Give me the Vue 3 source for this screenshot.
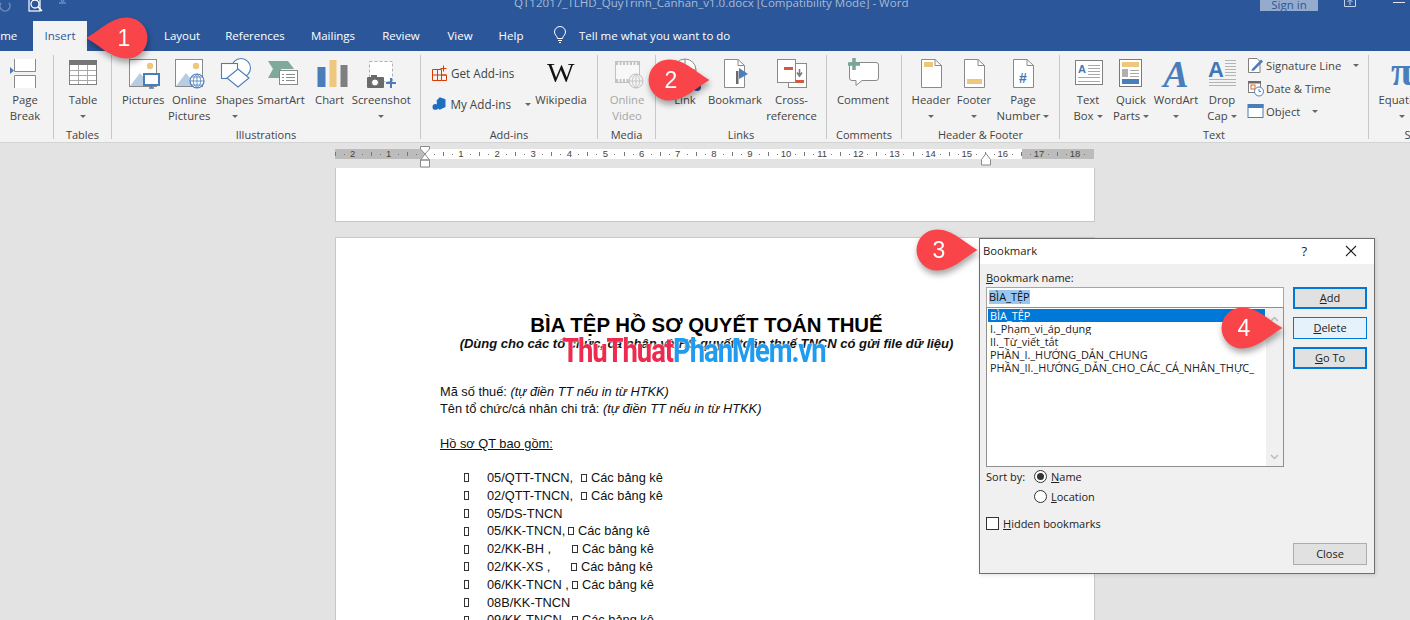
<script setup>
const rulerCells = [2,1,'',1,2,3,4,5,6,7,8,9,10,11,12,13,14,15,16,17,18]
const rows = [
  { code: '05/QTT-TNCN,', at: 94, extra: true },
  { code: '02/QTT-TNCN,', at: 94, extra: true },
  { code: '05/DS-TNCN', at: 94, extra: false },
  { code: '05/KK-TNCN,', at: 81, extra: true },
  { code: '02/KK-BH ,', at: 85, extra: true },
  { code: '02/KK-XS ,', at: 84, extra: true },
  { code: '06/KK-TNCN ,', at: 85, extra: true },
  { code: '08B/KK-TNCN', at: 94, extra: false },
  { code: '09/KK-TNCN ,', at: 85, extra: true }
]
const bookmarks = ['BÌA_TỆP','I._Phạm_vi_áp_dụng','II._Từ_viết_tắt','PHẦN_I._HƯỚNG_DẪN_CHUNG','PHẦN_II._HƯỚNG_DẪN_CHO_CÁC_CÁ_NHÂN_THỰC_']
const callouts = [
  { n: 1, x: 128, y: 38, flip: true, tx: -4 },
  { n: 2, x: 668, y: 80, flip: false, tx: 3 },
  { n: 3, x: 936, y: 250, flip: false, tx: 3 },
  { n: 4, x: 1241, y: 328, flip: false, tx: 3 }
]
</script>

<template>
  <div class="app">
    <header class="head">
      <div class="qat">
        <svg class="qat-ic" width="70" height="16" viewBox="0 0 70 16">
          <path d="M1 3 A5 5 0 1 0 9 3" fill="none" stroke="#6f8dba" stroke-width="1.4"/>
          <rect x="29" y="-3" width="11" height="14" fill="none" stroke="#fff" stroke-width="1.2"/>
          <circle cx="35" cy="4" r="4" fill="#2b579a" stroke="#fff" stroke-width="1.3"/>
          <path d="M38 7 L42 11" stroke="#fff" stroke-width="1.6"/>
          <path d="M59 3 H66 M60 -1 L62.500 2 L65 -1" fill="none" stroke="#8ea6ca" stroke-width="1"/>
        </svg>
      </div>
      <div class="doc-title">QT12017_TLHD_QuyTrinh_Canhan_v1.0.docx [Compatibility Mode]  -  Word</div>
      <div class="win">
        <span class="signin">Sign in</span>
        <svg width="12" height="7" viewBox="0 0 12 7" class="share"><path d="M.5 0 V6.500 H11.500 V0 M6 5 V0 M3.500 2 L6 -.5 L8.500 2" fill="none" stroke="#c5d2e6" stroke-width="1"/></svg>
        <span class="minim"></span>
      </div>
    </header>
    <nav class="tabs">
      <span class="tab home">Home</span>
      <span class="tab active">Insert</span>
      <span class="tab spacer"></span>
      <span class="tab w-layout">Layout</span>
      <span class="tab w-ref">References</span>
      <span class="tab w-mail">Mailings</span>
      <span class="tab w-rev">Review</span>
      <span class="tab w-view">View</span>
      <span class="tab w-help">Help</span>
      <span class="tell">
        <svg width="14" height="18" viewBox="0 0 14 18"><path d="M4.500 12.500 C4 9.500 1.500 9 1.500 6 A5.500 5.500 0 0 1 12.500 6 C12.500 9 10 9.500 9.500 12.500 Z M5 14.500 H9 M6 16.500 H8" fill="none" stroke="#fff" stroke-width="1"/></svg>
        <span>Tell me what you want to do</span>
      </span>
    </nav>

    <section class="ribbon">
      <div class="grp g-page">
        <div class="items">
          <div class="big w50">
            <svg class="ic" viewBox="0 0 44 36"><path d="M11.500 3 V15.500 H32.500 V3 M11.500 32 V19.500 H32.500 V32" fill="#fff" stroke="#8a8a8a"/><path d="M7 11 L11 14.500 L7 18z" fill="#4a7ebb"/></svg>
            <span class="lbl">Page</span><span class="lbl">Break</span>
          </div>
        </div>
      </div>

      <div class="grp g-tables">
        <div class="items">
          <div class="big w58">
            <svg class="ic" viewBox="0 0 44 36"><rect x="8.500" y="4.500" width="27" height="24" fill="#fff" stroke="#808080"/><rect x="8" y="4" width="28" height="5" fill="#767676"/><path d="M17.500 9 V28 M26.500 9 V28 M9 14.500 H35 M9 19.500 H35 M9 24.500 H35" stroke="#a8a8a8"/></svg>
            <span class="lbl">Table</span><span class="lbl"><i class="caret"></i></span>
          </div>
        </div>
        <div class="gl">Tables</div>
      </div>

      <div class="grp g-ill">
        <div class="items pl8">
          <div class="big w-pic">
            <svg class="ic" viewBox="0 0 44 36"><rect x="8.500" y="3.500" width="27" height="27" fill="#fff" stroke="#8a8a8a"/><path d="M9 30 L19 17 L30 30z" fill="#b9cde2"/><circle cx="29" cy="10" r="3.200" fill="#efc77c"/><rect x="23" y="18" width="15" height="11" fill="#fff" stroke="#4a7ebb" stroke-width="2"/><path d="M28 32 H33 M30.500 29 V32" stroke="#4a7ebb" stroke-width="1.400"/></svg>
            <span class="lbl">Pictures</span>
          </div>
          <div class="big w-onl">
            <svg class="ic" viewBox="0 0 44 36"><rect x="8.500" y="3.500" width="27" height="27" fill="#fff" stroke="#8a8a8a"/><path d="M9 30 L19 17 L30 30z" fill="#b9cde2"/><circle cx="29" cy="10" r="3.200" fill="#efc77c"/><circle cx="30" cy="25" r="7" fill="#fff" stroke="#4a7ebb" stroke-width="1.200"/><path d="M23 25 H37 M30 18 V32 M24.500 21 H35.500 M24.500 29 H35.500 M30 18 C25 22 25 28 30 32 C35 28 35 22 30 18" fill="none" stroke="#4a7ebb" stroke-width=".8"/></svg>
            <span class="lbl">Online</span><span class="lbl">Pictures</span>
          </div>
          <div class="big w-sha">
            <svg class="ic" viewBox="0 0 44 36"><circle cx="28" cy="12" r="9.500" fill="#fff" stroke="#4a7ebb" stroke-width="1.100"/><rect x="8.500" y="7.500" width="16" height="15" fill="#fff" stroke="#4a7ebb" stroke-width="1.100"/><path d="M25 13 L36 22 L25 31 L14 22z" fill="#fff" stroke="#4a7ebb" stroke-width="1.100"/></svg>
            <span class="lbl">Shapes</span><span class="lbl"><i class="caret"></i></span>
          </div>
          <div class="big w-sma">
            <svg class="ic" viewBox="0 0 44 36"><path d="M9 5 H29 L35 13 H22 V22 H9 L14 13z" fill="#7fa99b"/><rect x="20.500" y="14.500" width="18" height="14" fill="#fff" stroke="#8a8a8a"/><path d="M23 18.500 H25 M27 18.500 H36 M23 21.500 H25 M27 21.500 H36 M23 24.500 H25 M27 24.500 H36" stroke="#8a8a8a"/></svg>
            <span class="lbl">SmartArt</span>
          </div>
          <div class="big w-cha">
            <svg class="ic" viewBox="0 0 44 36"><rect x="9.500" y="11" width="8" height="20" fill="#4a7ebb"/><rect x="21.500" y="4" width="7" height="27" fill="#eec87f"/><rect x="32.500" y="9" width="7" height="22" fill="#7f7f7f"/></svg>
            <span class="lbl">Chart</span>
          </div>
          <div class="big w-scr">
            <svg class="ic" viewBox="0 0 44 36"><rect x="10.500" y="5.500" width="23" height="20" fill="#fff" stroke="#b0b0b0" stroke-dasharray="3 2"/><rect x="8" y="21" width="17" height="11" rx="1" fill="#6a6a6a"/><rect x="12" y="19" width="6" height="3" fill="#6a6a6a"/><circle cx="16" cy="26.500" r="3.500" fill="#fff" stroke="#6a6a6a"/><path d="M32 22 V32 M27 27 H37" stroke="#4a7ebb" stroke-width="2"/></svg>
            <span class="lbl">Screenshot</span><span class="lbl"><i class="caret"></i></span>
          </div>
        </div>
        <div class="gl">Illustrations</div>
      </div>

      <div class="grp g-add">
        <div class="items pl11">
          <div class="small-col">
            <div class="small">
              <svg width="15" height="16" viewBox="0 0 15 16"><path d="M.5 4.500 H9.500 V15.500 H.5z M.5 10 H14.500 M5.500 4.500 V15.500 M9.500 10 H14.500 V15.500 H9.500" fill="none" stroke="#d83b01"/><path d="M11.500 .5 V6.500 M8.500 3.500 H14.500" stroke="#d83b01"/></svg>
              <span>Get Add-ins</span>
            </div>
            <div class="small">
              <svg width="15" height="16" viewBox="0 0 15 16"><path d="M8 1 L14 3 V11 L8 14 L5 12 V4z" fill="#1f6fc0"/><circle cx="3.500" cy="11" r="3" fill="#1f6fc0"/></svg>
              <span>My Add-ins</span><i class="caret ml12"></i>
            </div>
          </div>
          <div class="big w60">
            <div class="wiki">W</div>
            <span class="lbl">Wikipedia</span>
          </div>
        </div>
        <div class="gl">Add-ins</div>
      </div>

      <div class="grp g-media">
        <div class="items">
          <div class="big w58 dim">
            <svg class="ic" viewBox="0 0 44 36"><rect x="10.500" y="5.500" width="24" height="21" fill="#f8f8f8" stroke="#c2c2c2"/><path d="M11 7.500 H34 M11 24.500 H34" stroke="#c2c2c2" stroke-width="3" stroke-dasharray="2 1.500"/><circle cx="31" cy="25" r="7" fill="#f3f3f3" stroke="#bdbdbd"/><path d="M24 25 H38 M31 18 V32 M31 18 C26 22 26 28 31 32 C36 28 36 22 31 18" fill="none" stroke="#bdbdbd" stroke-width=".8"/></svg>
            <span class="lbl">Online</span><span class="lbl">Video</span>
          </div>
        </div>
        <div class="gl">Media</div>
      </div>

      <div class="grp g-links">
        <div class="items">
          <div class="big w58">
            <svg class="ic" viewBox="0 0 44 36"><circle cx="22" cy="14" r="11" fill="#fff" stroke="#8a8a8a"/><path d="M11 14 H33 M22 3 V25" stroke="#8a8a8a"/><circle cx="34" cy="31" r="4" fill="#2b579a"/></svg>
            <span class="lbl">Link</span>
          </div>
          <div class="big w42">
            <svg class="ic" viewBox="0 0 44 36"><path d="M11.500 3.500 H25 L31.500 9.500 V31.500 H11.500z" fill="#fff" stroke="#8a8a8a"/><path d="M25 3.500 V9.500 H31.500" fill="none" stroke="#8a8a8a"/><rect x="23" y="15" width="2.500" height="13" fill="#6a6a6a"/><path d="M26 12 L35 18 L26 23z" fill="#4a7ebb"/></svg>
            <span class="lbl">Bookmark</span>
          </div>
          <div class="big w71">
            <svg class="ic" viewBox="0 0 44 36"><rect x="18.500" y="7.500" width="18" height="24" fill="#fff" stroke="#8a8a8a"/><rect x="7.500" y="3.500" width="18" height="23" fill="#fff" stroke="#8a8a8a"/><rect x="14" y="11" width="9" height="3" fill="#d2593c"/><rect x="26" y="24" width="8" height="3" fill="#d2593c"/><path d="M29.500 13 V19 M27 16.500 L29.500 20 L32 16.500" fill="none" stroke="#7a7a7a" stroke-width="1.600"/></svg>
            <span class="lbl">Cross-</span><span class="lbl">reference</span>
          </div>
        </div>
        <div class="gl">Links</div>
      </div>

      <div class="grp g-com">
        <div class="items">
          <div class="big w72">
            <svg class="ic" viewBox="0 0 44 36"><path d="M11 6.500 H35 Q37.500 6.500 37.500 9 V22 Q37.500 24.500 35 24.500 H21 L15 29.500 V24.500 H11 Q8.500 24.500 8.500 22 V9 Q8.500 6.500 11 6.500z" fill="#fff" stroke="#8a8a8a"/><path d="M13 2 V14 M7 8 H19" stroke="#79a795" stroke-width="3.500"/></svg>
            <span class="lbl">Comment</span>
          </div>
        </div>
        <div class="gl">Comments</div>
      </div>

      <div class="grp g-hf">
        <div class="items">
          <div class="big w58">
            <svg class="ic" viewBox="0 0 44 36"><path d="M12.500 3.500 H26 L32.500 9.500 V31.500 H12.500z" fill="#fff" stroke="#8a8a8a"/><path d="M26 3.500 V9.500 H32.500" fill="none" stroke="#8a8a8a"/><rect x="15" y="6" width="9" height="5" fill="#efc77c"/></svg>
            <span class="lbl">Header</span><span class="lbl"><i class="caret"></i></span>
          </div>
          <div class="big w28">
            <svg class="ic" viewBox="0 0 44 36"><path d="M12.500 3.500 H26 L32.500 9.500 V31.500 H12.500z" fill="#fff" stroke="#8a8a8a"/><path d="M26 3.500 V9.500 H32.500" fill="none" stroke="#8a8a8a"/><rect x="15" y="23" width="15" height="5" fill="#efc77c"/></svg>
            <span class="lbl">Footer</span><span class="lbl"><i class="caret"></i></span>
          </div>
          <div class="big w70">
            <svg class="ic" viewBox="0 0 44 36"><path d="M12.500 3.500 H26 L32.500 9.500 V31.500 H12.500z" fill="#fff" stroke="#8a8a8a"/><path d="M26 3.500 V9.500 H32.500" fill="none" stroke="#8a8a8a"/><text x="22" y="27" class="hash">#</text></svg>
            <span class="lbl">Page</span><span class="lbl">Number<i class="caret ml2"></i></span>
          </div>
        </div>
        <div class="gl">Header &amp; Footer</div>
      </div>

      <div class="grp g-text">
        <div class="items">
          <div class="big w56">
            <svg class="ic" viewBox="0 0 44 36"><rect x="9.500" y="4.500" width="27" height="24" fill="#fff" stroke="#808080"/><text x="12" y="17" class="txt-a">A</text><path d="M22 9.500 H34 M22 12.500 H34 M22 15.500 H34 M22 18.500 H34 M12 21.500 H34 M12 25.500 H34" stroke="#a8a8a8"/></svg>
            <span class="lbl">Text</span><span class="lbl">Box<i class="caret ml2"></i></span>
          </div>
          <div class="big w30">
            <svg class="ic" viewBox="0 0 44 36"><rect x="10.500" y="3.500" width="22" height="27" fill="#fff" stroke="#7a7a7a"/><rect x="13" y="6" width="17" height="5" fill="#efc77c"/><rect x="13" y="13" width="6" height="8" fill="#b0b0b0"/><path d="M21 14.500 H30 M21 17.500 H30 M21 20.500 H30" stroke="#a8a8a8"/><rect x="13" y="23" width="17" height="5" fill="#4a7ebb"/></svg>
            <span class="lbl">Quick</span><span class="lbl">Parts<i class="caret ml2"></i></span>
          </div>
          <div class="big w60">
            <div class="wa">A</div>
            <span class="lbl">WordArt</span><span class="lbl"><i class="caret"></i></span>
          </div>
          <div class="big w32">
            <svg class="ic" viewBox="0 0 44 36"><text x="8" y="21" class="dc-a">A</text><path d="M25 4.500 H36 M25 7.500 H36 M25 10.500 H36 M25 13.500 H36 M25 16.500 H36 M25 19.500 H36 M9 23.500 H36 M9 26.500 H36 M9 29.500 H36" stroke="#b4b4b4"/></svg>
            <span class="lbl">Drop</span><span class="lbl">Cap<i class="caret ml2"></i></span>
          </div>
          <div class="side-col">
            <div class="side">
              <svg width="17" height="18" viewBox="0 0 17 18"><path d="M1.500 2.500 H10 L13 5.500 V16.500 H1.500z" fill="#fff" stroke="#808080"/><path d="M5 13 L14 3.500 L16 5.500 L7 14.500 L4.500 15z" fill="#4a7ebb"/></svg>
              <span>Signature Line</span><i class="caret ml12"></i>
            </div>
            <div class="side">
              <svg width="17" height="18" viewBox="0 0 17 18"><rect x="1.500" y="2.500" width="12" height="11" fill="#fff" stroke="#808080"/><rect x="1" y="2" width="13" height="2.500" fill="#6a6a6a"/><rect x="4" y="6" width="4" height="4" fill="#fff" stroke="#d86a1c"/><circle cx="12" cy="12.500" r="4.500" fill="#fff" stroke="#4a7ebb"/><path d="M12 10 V12.500 H14" fill="none" stroke="#4a7ebb"/></svg>
              <span>Date &amp; Time</span>
            </div>
            <div class="side">
              <svg width="17" height="18" viewBox="0 0 17 18"><rect x="1" y="2.500" width="15" height="13" fill="#fff" stroke="#4a7ebb"/><rect x="1" y="2" width="15.500" height="4" fill="#4a7ebb"/></svg>
              <span>Object</span><i class="caret ml12"></i>
            </div>
          </div>
        </div>
        <div class="gl">Text</div>
      </div>

      <div class="grp g-sym">
        <div class="items">
          <div class="big w66">
            <div class="pi">π</div>
            <span class="lbl">Equation</span><span class="lbl"><i class="caret"></i></span>
          </div>
        </div>
        <div class="gl">Symbols</div>
      </div>
    </section>

    <main class="canvas">
      <div class="ruler">
        <span v-for="(c, i) in rulerCells" :key="i" class="cell">{{ c }}</span>
        <svg class="m-left" width="12" height="22" viewBox="0 0 12 22"><path d="M1.500 .5 H10.500 V3 L6 8 L1.500 3z M1.500 14 L6 8 L10.500 14 Z M1.500 14 H10.500 V21 H1.500z" fill="#fff" stroke="#8a8a8a"/></svg>
        <svg class="m-right" width="12" height="13" viewBox="0 0 12 13"><path d="M6 .5 L10.500 6.500 V12 H1.500 V6.500z" fill="#fff" stroke="#8a8a8a"/></svg>
      </div>

      <div class="page p1"></div>

      <article class="page p2">
        <h1 class="doc-h">BÌA TỆP HỒ SƠ QUYẾT TOÁN THUẾ</h1>
        <p class="doc-sub">(Dùng cho các tổ chức, cá nhân và HS quyết toán thuế TNCN có gửi file dữ liệu)</p>
        <p class="ln mt-a">Mã số thuế: <em>(tự điền TT nếu in từ HTKK)</em></p>
        <p class="ln">Tên tổ chức/cá nhân chi trả: <em>(tự điền TT nếu in từ HTKK)</em></p>
        <p class="ln mt-b"><u>Hồ sơ QT bao gồm:</u></p>
        <ul class="list">
          <li v-for="r in rows" :key="r.code" class="row">
            <i class="box"></i>
            <span class="code" :style="{ width: r.at + 'px' }">{{ r.code }}</span>
            <template v-if="r.extra"><i class="box b2"></i><span>Các bảng kê</span></template>
          </li>
        </ul>
      </article>
    </main>

    <div class="mark"><span class="m-red">ThuThuat</span><span class="m-blue">PhanMem.vn</span></div>

    <div class="dlg">
      <div class="dlg-top">
        <span class="dlg-title">Bookmark</span>
        <span class="dlg-q">?</span>
        <svg width="12" height="12" viewBox="0 0 12 12" class="dlg-x"><path d="M1 1 L11 11 M11 1 L1 11" stroke="#222" stroke-width="1.100"/></svg>
      </div>
      <div class="dlg-body">
        <div class="dlg-left">
          <label class="dlg-lbl"><u>B</u>ookmark name:</label>
          <div class="inp"><span class="sel">BÌA_TỆP</span></div>
          <div class="lst">
            <div class="lst-items">
              <div v-for="(b, i) in bookmarks" :key="b" class="lst-i" :class="{ on: i === 0 }">{{ b }}</div>
            </div>
            <div class="scroll">
              <svg width="9" height="6" viewBox="0 0 9 6"><path d="M1 5 L4.500 1.500 L8 5" fill="none" stroke="#bcbcbc" stroke-width="1.500"/></svg>
              <svg width="9" height="6" viewBox="0 0 9 6"><path d="M1 1 L4.500 4.500 L8 1" fill="none" stroke="#bcbcbc" stroke-width="1.500"/></svg>
            </div>
          </div>
          <div class="sort">
            <span class="sort-l">Sort by:</span>
            <div class="radios">
              <div class="radio-row"><i class="radio on"></i><span><u>N</u>ame</span></div>
              <div class="radio-row"><i class="radio"></i><span><u>L</u>ocation</span></div>
            </div>
          </div>
          <div class="hidden-row"><i class="check"></i><span><u>H</u>idden bookmarks</span></div>
        </div>
        <div class="dlg-right">
          <button class="btn def"><u>A</u>dd</button>
          <button class="btn hov"><u>D</u>elete</button>
          <button class="btn def"><u>G</u>o To</button>
          <button class="btn plain">Close</button>
        </div>
      </div>
    </div>

    <svg v-for="c in callouts" :key="c.n" class="callout" :style="{ left: (c.x - 45) + 'px', top: (c.y - 30) + 'px' }" width="90" height="60" viewBox="-45 -30 90 60">
      <path :transform="c.flip ? 'scale(-1 1)' : ''" d="M41.500 0 C29 -7 17 -20.500 1 -20.500 A20.500 20.500 0 0 0 1 20.500 C17 20.500 29 7 41.500 0Z" fill="#f94449"/>
      <text :x="c.tx" y="8" class="c-num">{{ c.n }}</text>
    </svg>
  </div>
</template>

<style>
html, body { margin: 0; padding: 0; background: #e3e3e3; }
</style>

<style scoped>
.app { position: relative; width: 1410px; height: 620px; overflow: hidden; background: #e3e3e3; font-family: "Open Sans", "Noto Sans", sans-serif; font-size: 11.3px; color: #444; }
.head { height: 21px; background: #2b579a; display: flex; overflow: hidden; }
.qat { width: 514px; height: 16px; flex: none; }
.qat-ic { display: block; }
.doc-title { margin-top: -5px; line-height: 16px; color: #a8bad6; white-space: pre; font-size: 11.55px; }
.win { margin-left: auto; display: flex; align-items: flex-start; }
.signin { width: 58px; height: 11px; background: #95abcd; color: #2b579a; text-align: center; line-height: 10px; font-size: 11.5px; overflow: hidden; }
.share { margin-left: 26px; }
.minim { width: 12px; height: 1px; background: #dfe6f1; margin: 2px 5px 0 37px; }
.tabs { height: 30px; background: #2b579a; display: flex; align-items: stretch; color: #fff; font-size: 11.5px; }
.tab { display: flex; align-items: center; justify-content: center; flex: none; box-sizing: border-box; padding-bottom: 2px; }
.home { width: 54px; margin-left: -26px; margin-right: 5px; }
.active { width: 54px; background: #f3f3f3; color: #2b579a; }
.spacer { width: 63px; }
.w-layout { width: 64px; }
.w-ref { width: 82px; }
.w-mail { width: 74px; }
.w-rev { width: 62px; }
.w-view { width: 56px; }
.w-help { width: 46px; }
.tell { display: flex; align-items: center; gap: 12px; margin-left: 19px; padding-bottom: 2px; }
.ribbon { height: 92px; box-sizing: border-box; padding-top: 4px; background: #f3f3f3; border-bottom: 1px solid #d4d4d4; display: flex; overflow: hidden; }
.grp { height: 84px; flex: none; box-sizing: border-box; padding-top: 1px; border-right: 1px solid #c8c8c8; }
.g-page { width: 54px; }
.g-tables { width: 58px; }
.g-ill { width: 309px; }
.g-add { width: 177px; }
.g-media { width: 58px; }
.g-links { width: 171px; }
.g-com { width: 75px; }
.g-hf { width: 158px; }
.g-text { width: 309px; }
.g-sym { width: 114px; border-right: none; }
.items { height: 72px; display: flex; }
.pl8 { padding-left: 8px; }
.pl11 { padding-left: 11px; }
.gl { line-height: 14px; text-align: center; white-space: nowrap; font-size: 11px; }
.big { display: flex; flex-direction: column; align-items: center; flex: none; }
.ic { width: 44px; height: 36px; flex: none; display: block; }
.lbl { line-height: 16px; height: 16px; white-space: nowrap; flex: none; display: flex; align-items: center; }
.dim { color: #a6a6a6; }
.w28 { width: 28px; } .w30 { width: 30px; } .w32 { width: 32px; } .w42 { width: 42px; } .w50 { width: 50px; }
.w56 { width: 56px; } .w58 { width: 58px; } .w60 { width: 60px; } .w66 { width: 66px; } .w70 { width: 70px; }
.w71 { width: 71px; } .w72 { width: 72px; }
.w-pic { width: 46.5px; } .w-onl, .w-sha { width: 45.5px; } .w-sma { width: 47px; } .w-cha { width: 50px; } .w-scr { width: 53.5px; }
.caret { display: inline-block; width: 0; height: 0; border-left: 3.5px solid transparent; border-right: 3.5px solid transparent; border-top: 3.5px solid #666; flex: none; }
.ml2 { margin-left: 3px; }
.ml12 { margin-left: 10px; }
.small-col { width: 99px; flex: none; padding-top: 9px; display: flex; flex-direction: column; gap: 15px; font-size: 11.7px; }
.small { height: 16px; display: flex; align-items: center; gap: 4px; white-space: nowrap; }
.wiki { height: 36px; font: 27px/34px "Liberation Serif", serif; color: #111; flex: none; transform: scaleX(1.08); }
.wa { height: 36px; font: italic 700 38px/36px "Liberation Serif", serif; color: #4a7ebb; flex: none; }
.pi { height: 36px; font: bold 40px/32px "Liberation Serif", serif; color: #4a7ebb; flex: none; }
.hash { font: bold 14px "Liberation Sans", sans-serif; fill: #3f78b8; text-anchor: middle; }
.txt-a { font: bold 11px "Liberation Sans", sans-serif; fill: #3f78b8; }
.dc-a { font: bold 22px "Liberation Sans", sans-serif; fill: #3f78b8; }
.side-col { margin-left: 9px; margin-top: -1px; display: flex; flex-direction: column; gap: 3px; }
.side { height: 20px; display: flex; align-items: center; gap: 2px; white-space: nowrap; }
.canvas { height: 477px; box-sizing: border-box; padding-top: 6px; overflow: hidden; }
.ruler { position: relative; width: 759px; height: 10px; margin-left: 334.500px; display: flex; background: linear-gradient(to right, #bcbcbc 90px, #fff 90px, #fff 687px, #bcbcbc 687px); }
.cell { width: 36.140px; flex: none; text-align: center; font: 9.5px/10px "Liberation Sans", sans-serif; color: #444;
  background:
    linear-gradient(#777, #777) 0 50% / 1px 4px no-repeat,
    linear-gradient(#777, #777) 9px 50% / 1px 1px no-repeat,
    linear-gradient(#777, #777) 27px 50% / 1px 1px no-repeat; }
.m-left { position: absolute; left: 84px; top: -3px; }
.m-right { position: absolute; left: 645px; top: 4px; }
.page { width: 760px; box-sizing: border-box; margin-left: 335px; background: #fff; border: 1px solid #c8c8c8; }
.p1 { height: 54px; margin-top: 9px; border-top: none; }
.p2 { margin-top: 15px; height: 460px; padding: 77px 121px 0 104px; font-family: "Liberation Sans", Arial, sans-serif; font-size: 12.8px; color: #111; }
.doc-h { margin: 0; text-align: center; font-size: 20.4px; line-height: 20px; font-weight: 700; color: #000; white-space: nowrap; }
.doc-sub { margin: 0; text-align: center; font-size: 13px; line-height: 17px; font-weight: 700; font-style: italic; white-space: nowrap; }
.ln { margin: 0; line-height: 17px; white-space: nowrap; }
.mt-a { margin-top: 31px; }
.mt-b { margin-top: 18px; }
.list { list-style: none; margin: 17px 0 0; padding: 0 0 0 24px; }
.row { height: 17.800px; line-height: 17.800px; display: flex; align-items: center; white-space: pre; }
.box { display: inline-block; box-sizing: border-box; width: 5px; height: 9px; border: 1px solid #333; flex: none; margin-right: 18px; }
.code { flex: none; white-space: pre; }
.b2 { width: 6px; height: 8px; margin-right: 4px; }
.mark { position: absolute; left: 562px; top: 330px; font: 700 34px/40px "Roboto", "Liberation Sans", sans-serif; letter-spacing: -1.300px; white-space: nowrap; transform: scaleX(.807); transform-origin: 0 50%; text-shadow: 0 0 2px #fff, 0 0 2px #fff; }
.m-red { color: #ee2a4f; }
.m-blue { color: #1f9bf0; }
.dlg { position: absolute; left: 979px; top: 238px; width: 396px; height: 336px; box-sizing: border-box; border: 1px solid #6e6e6e; background: #f0f0f0; display: flex; flex-direction: column; color: #222; font-size: 11px; box-shadow: 1px 1px 4px rgba(0,0,0,.12); }
.dlg-top { height: 25px; background: #fff; display: flex; align-items: center; padding: 0 0 2px 3px; box-sizing: border-box; flex: none; }
.dlg-title { font-size: 11.3px; }
.dlg-q { margin-left: auto; font-size: 13px; }
.dlg-x { margin: 0 17px 0 38px; }
.dlg-body { flex: 1; display: flex; gap: 9px; padding: 0 7px 8px 6px; min-height: 0; }
.dlg-left { width: 298px; flex: none; }
.dlg-lbl { display: block; height: 23px; line-height: 17px; padding-top: 5px; box-sizing: border-box; }
.inp { height: 20px; box-sizing: border-box; background: #fff; border: 1px solid #a5a5a5; border-bottom: none; padding: 2px 2px; line-height: 14px; display: flex; }
.sel { background: #9bc7ee; color: #111; height: 14px; }
.lst { height: 160px; box-sizing: border-box; background: #fff; border: 1px solid #8f8f8f; display: flex; }
.lst-items { flex: 1; padding: 1px 1px 0 1px; min-width: 0; }
.lst-i { height: 13px; line-height: 13px; padding-left: 2px; white-space: nowrap; overflow: hidden; color: #222; font-size: 10.9px; }
.lst-i.on { background: #0078d7; color: #fff; }
.scroll { width: 17px; flex: none; background: #f0f0f0; display: flex; flex-direction: column; justify-content: space-between; align-items: center; padding: 8px 0 6px; box-sizing: border-box; }
.sort { display: flex; margin-top: 1px; }
.sort-l { width: 48px; line-height: 17px; flex: none; }
.radios { display: flex; flex-direction: column; gap: 3px; }
.radio-row { height: 17px; display: flex; align-items: center; gap: 4px; }
.radio { width: 13px; height: 13px; box-sizing: border-box; border: 1px solid #333; border-radius: 50%; background: #fff; flex: none; display: flex; align-items: center; justify-content: center; }
.radio.on::after { content: ""; width: 7px; height: 7px; border-radius: 50%; background: #333; }
.hidden-row { display: flex; align-items: center; gap: 4px; margin-top: 10px; height: 17px; }
.check { width: 13px; height: 13px; box-sizing: border-box; border: 1px solid #333; background: #fff; flex: none; }
.dlg-right { width: 74px; flex: none; display: flex; flex-direction: column; gap: 8px; padding-top: 23px; }
.btn { width: 74px; height: 22px; box-sizing: border-box; font: 11px/16px "Open Sans", sans-serif; color: #222; background: #e1e1e1; padding: 0; flex: none; }
.def { border: 2px solid #0078d7; }
.hov { border: 1px solid #0078d7; background: #e5f1fb; }
.plain { border: 1px solid #adadad; margin-top: auto; }
.callout { position: absolute; overflow: visible; filter: drop-shadow(1px 4px 3px rgba(0,0,0,.35)); }
.c-num { font: 23px "Liberation Sans", sans-serif; fill: #fff; text-anchor: middle; }
</style>
